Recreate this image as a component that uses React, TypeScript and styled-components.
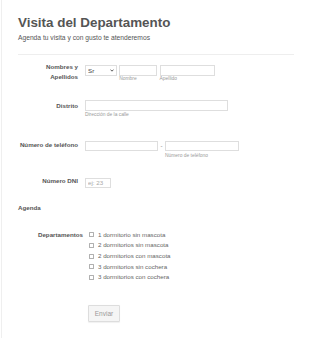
import styled, { createGlobalStyle } from "styled-components";

const GlobalStyle = createGlobalStyle`
  html, body {
    margin: 0;
    padding: 0;
    background: #ffffff;
  }
  body {
    font-family: "Liberation Sans", Arial, Helvetica, sans-serif;
  }
  * {
    box-sizing: border-box;
  }
`;

const departamentos = [
  "1 dormitorio sin mascota",
  "2 dormitorios sin mascota",
  "2 dormitorios con mascota",
  "3 dormitorios sin cochera",
  "3 dormitorios con cochera",
];

const App = () => {
  return (
    <>
      <GlobalStyle />
      <Page>
        <Header>
          <Title>Visita del Departamento</Title>
          <Subtitle>Agenda tu visita y con gusto te atenderemos</Subtitle>
        </Header>
        <Divider />

        <Row $mt={10}>
          <Label $shift={-3}>
            Nombres y
            <br />
            Apellidos
          </Label>
          <Fields>
            <SelectWrap>
              <Select defaultValue="Sr">
                <option>Sr</option>
                <option>Sra</option>
              </Select>
              <Chevron viewBox="0 0 8 6">
                <path d="M1 1.2 L4 4.4 L7 1.2" />
              </Chevron>
            </SelectWrap>
            <Group>
              <Input $w={38} />
              <SubLabel>Nombre</SubLabel>
            </Group>
            <Group>
              <Input $w={55.5} />
              <SubLabel>Apellido</SubLabel>
            </Group>
          </Fields>
        </Row>

        <Row $mt={17.7}>
          <Label $shift={0.7}>Distrito</Label>
          <Group>
            <Input $w={142.7} />
            <SubLabel $mt={1}>Dirección de la calle</SubLabel>
          </Group>
        </Row>

        <Row $mt={22.7}>
          <Label $shift={-0.4}>Número de teléfono</Label>
          <Fields $gap={0}>
            <Input $w={73} $h={10.5} />
            <Dash>-</Dash>
            <Group>
              <Input $w={73.7} $h={10.5} />
              <SubLabel $mt={1.8}>Número de teléfono</SubLabel>
            </Group>
          </Fields>
        </Row>

        <Row $mt={19}>
          <Label $shift={-1.7}>Número DNI</Label>
          <Input $w={26} $h={10} placeholder="ej: 23" />
        </Row>

        <Section>Agenda</Section>

        <Row $mt={16}>
          <Label $shift={1} $w={65} $gap={5.5}>
            Departamentos
          </Label>
          <Options>
            {departamentos.map((d) => (
              <Option key={d}>
                <Check type="checkbox" />
                <span>{d}</span>
              </Option>
            ))}
          </Options>
        </Row>

        <Submit type="button">Enviar</Submit>
      </Page>
    </>
  );
};

export default App;

const Page = styled.div`
  width: 310px;
  min-height: 338px;
  margin-left: 1px;
  padding: 0 0 0 16px;
  border-left: 1px solid #efefef;
  overflow: hidden;
`;

const Header = styled.header`
  padding-top: 15px;
`;

const Title = styled.h1`
  margin: 0;
  font-size: 13.4px;
  line-height: 16px;
  font-weight: 700;
  color: #555555;
`;

const Subtitle = styled.p`
  margin: 3px 0 0;
  font-size: 6.7px;
  line-height: 8px;
  color: #555555;
`;

const Divider = styled.div`
  margin-top: 12px;
  width: 276px;
  height: 1px;
  background: #eeeeee;
`;

const Row = styled.div<{ $mt: number }>`
  display: flex;
  align-items: flex-start;
  margin-top: ${({ $mt }) => $mt}px;
`;

const Label = styled.label<{ $shift: number; $w?: number; $gap?: number }>`
  flex-shrink: 0;
  width: ${({ $w }) => $w ?? 60}px;
  margin-right: ${({ $gap }) => $gap ?? 7}px;
  margin-top: ${({ $shift }) => $shift}px;
  text-align: right;
  font-size: 6.2px;
  line-height: 10px;
  font-weight: 700;
  color: #555555;
  white-space: nowrap;
`;

const Fields = styled.div<{ $gap?: number }>`
  display: flex;
  align-items: flex-start;
  gap: ${({ $gap }) => $gap ?? 2.3}px;
`;

const Group = styled.div`
  display: flex;
  flex-direction: column;
`;

const Input = styled.input<{ $w: number; $h?: number }>`
  display: block;
  width: ${({ $w }) => $w}px;
  height: ${({ $h }) => $h ?? 11}px;
  margin: 0;
  padding: 0 2px;
  border: 1px solid #dedede;
  border-radius: 0;
  background: #ffffff;
  font-family: inherit;
  font-size: 6.2px;
  color: #555555;
  outline: none;

  &::placeholder {
    color: #a8a8a8;
  }
`;

const SubLabel = styled.span<{ $mt?: number }>`
  margin-top: ${({ $mt }) => $mt ?? 0.3}px;
  font-size: 4.9px;
  line-height: 6px;
  color: #9a9a9a;
  white-space: nowrap;
`;

const SelectWrap = styled.div`
  position: relative;
  width: 32px;
  height: 10.7px;
`;

const Select = styled.select`
  display: block;
  appearance: none;
  width: 100%;
  height: 100%;
  margin: 0;
  padding: 0 0 0 2px;
  border: 1px solid #dedede;
  border-radius: 0;
  background: #ffffff;
  font-family: inherit;
  font-size: 6.2px;
  color: #444444;
  outline: none;
`;

const Chevron = styled.svg`
  position: absolute;
  right: 3.5px;
  top: 3.8px;
  width: 4px;
  height: 3px;
  fill: none;
  stroke: #333333;
  stroke-width: 1.6;
  pointer-events: none;
`;

const Dash = styled.span`
  padding: 0 2.4px 0 2.6px;
  font-size: 6.2px;
  line-height: 10.5px;
  color: #777777;
`;

const Section = styled.div`
  margin-top: 15px;
  font-size: 6.2px;
  line-height: 10px;
  font-weight: 700;
  color: #555555;
`;

const Options = styled.div`
  display: flex;
  flex-direction: column;
`;

const Option = styled.label`
  display: flex;
  align-items: center;
  gap: 4.5px;
  height: 10.67px;
  font-size: 6.2px;
  color: #666666;
  white-space: nowrap;
`;

const Check = styled.input`
  appearance: none;
  flex-shrink: 0;
  width: 5px;
  height: 5px;
  margin: 1px 0 0;
  border: 0.8px solid #b0b0b0;
  border-radius: 0.5px;
  background: #ffffff;
`;

const Submit = styled.button`
  display: block;
  margin: 22.7px 0 0 70px;
  width: 32px;
  height: 16.7px;
  padding: 0;
  border: 1px solid #dddddd;
  border-radius: 1px;
  background: #f5f5f5;
  box-shadow: 0 0.5px 1px rgba(0, 0, 0, 0.06);
  font-family: inherit;
  font-size: 6.5px;
  color: #9a9a9a;
`;
